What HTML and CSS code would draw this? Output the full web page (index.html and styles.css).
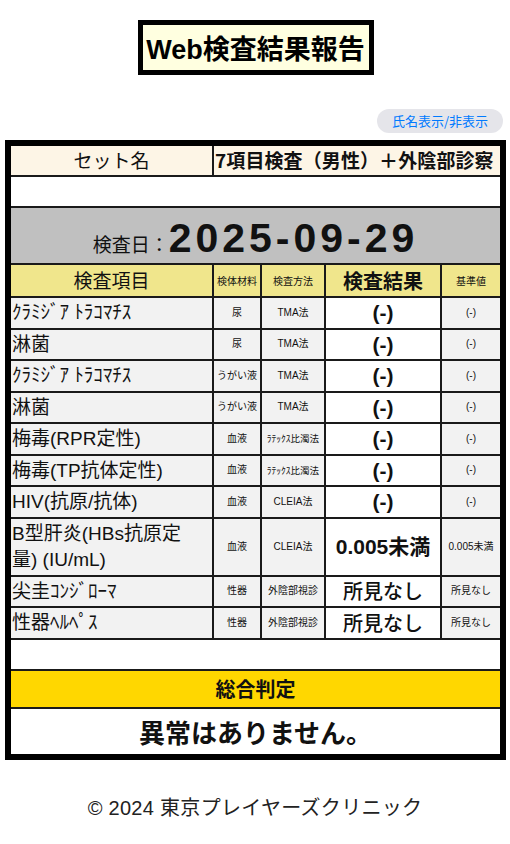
FILE: index.html
```html
<!DOCTYPE html>
<html lang="ja">
<head>
<meta charset="utf-8">
<title>Web検査結果報告</title>
<link rel="stylesheet" href="styles.css">
</head>
<body>
<div class="page">
  <header class="title-wrap">
    <h1 class="title">Web検査結果報告</h1>
  </header>
  <div class="toggle-row">
    <button class="toggle">氏名表示/非表示</button>
  </div>
  <div class="report">
    <table class="grid">
      <colgroup>
        <col class="c-item"><col class="c-mat"><col class="c-meth"><col class="c-res"><col class="c-ref">
      </colgroup>
      <tr class="r-set">
        <td class="set-label">セット名</td>
        <td class="set-value" colspan="4">7項目検査（男性）＋外陰部診察</td>
      </tr>
      <tr class="r-blank"><td colspan="5" class="blank"></td></tr>
      <tr class="r-date">
        <td colspan="5" class="date"><span class="date-label">検査日：</span><span class="date-value">2025-09-29</span></td>
      </tr>
      <tr class="r-head">
        <td class="h-item">検査項目</td>
        <td class="h-small">検体材料</td>
        <td class="h-small">検査方法</td>
        <td class="h-res">検査結果</td>
        <td class="h-small">基準値</td>
      </tr>
      <tr class="r-data">
        <td class="item">ｸﾗﾐｼﾞｱ ﾄﾗｺﾏﾁｽ</td><td class="small">尿</td><td class="small">TMA法</td><td class="res">(-)</td><td class="small">(-)</td>
      </tr>
      <tr class="r-data">
        <td class="item">淋菌</td><td class="small">尿</td><td class="small">TMA法</td><td class="res">(-)</td><td class="small">(-)</td>
      </tr>
      <tr class="r-data">
        <td class="item">ｸﾗﾐｼﾞｱ ﾄﾗｺﾏﾁｽ</td><td class="small">うがい液</td><td class="small">TMA法</td><td class="res">(-)</td><td class="small">(-)</td>
      </tr>
      <tr class="r-data">
        <td class="item">淋菌</td><td class="small">うがい液</td><td class="small">TMA法</td><td class="res">(-)</td><td class="small">(-)</td>
      </tr>
      <tr class="r-data">
        <td class="item">梅毒(RPR定性)</td><td class="small">血液</td><td class="small tiny">ﾗﾃｯｸｽ比濁法</td><td class="res">(-)</td><td class="small">(-)</td>
      </tr>
      <tr class="r-data">
        <td class="item">梅毒(TP抗体定性)</td><td class="small">血液</td><td class="small tiny">ﾗﾃｯｸｽ比濁法</td><td class="res">(-)</td><td class="small">(-)</td>
      </tr>
      <tr class="r-data">
        <td class="item">HIV(抗原/抗体)</td><td class="small">血液</td><td class="small">CLEIA法</td><td class="res">(-)</td><td class="small">(-)</td>
      </tr>
      <tr class="r-tall">
        <td class="item">B型肝炎(HBs抗原定<br>量) (IU/mL)</td><td class="small">血液</td><td class="small">CLEIA法</td><td class="res">0.005未満</td><td class="small">0.005未満</td>
      </tr>
      <tr class="r-data">
        <td class="item">尖圭ｺﾝｼﾞﾛｰﾏ</td><td class="small">性器</td><td class="small">外陰部視診</td><td class="res res-text">所見なし</td><td class="small">所見なし</td>
      </tr>
      <tr class="r-data">
        <td class="item">性器ﾍﾙﾍﾟｽ</td><td class="small">性器</td><td class="small">外陰部視診</td><td class="res res-text">所見なし</td><td class="small">所見なし</td>
      </tr>
      <tr class="r-blank"><td colspan="5" class="blank"></td></tr>
      <tr class="r-judge"><td colspan="5" class="judge">総合判定</td></tr>
      <tr class="r-verdict"><td colspan="5" class="verdict">異常はありません。</td></tr>
    </table>
  </div>
  <footer class="footer">© 2024 東京プレイヤーズクリニック</footer>
</div>
</body>
</html>
```

FILE: styles.css
```css
* { box-sizing: border-box; }

html, body {
  margin: 0;
  padding: 0;
  background: #ffffff;
}

body {
  font-family: "Liberation Sans", "Noto Sans CJK JP", sans-serif;
  color: #111;
}

.page {
  padding-top: 20px;
}

.title-wrap {
  display: flex;
  justify-content: center;
}

.title {
  margin: 0 0 0 1px;
  width: 236px;
  height: 55px;
  border: 5px solid #000;
  background: #ffffe0;
  display: flex;
  align-items: center;
  justify-content: center;
  font-family: "Liberation Sans", "Noto Sans CJK JP", sans-serif;
  font-size: 27px;
  font-weight: 700;
  color: #000;
  white-space: nowrap;
}

.toggle-row {
  display: flex;
  justify-content: flex-end;
  padding-right: 7px;
  margin-top: 34px;
}

.toggle {
  width: 126px;
  height: 24px;
  border: none;
  border-radius: 12px;
  background: #e5e5ea;
  color: #007aff;
  font-family: "Noto Sans CJK JP", sans-serif;
  font-size: 13px;
  padding: 0;
  line-height: 24px;
}

.report {
  margin: 7px 4px 0 5px;
  border: 6px solid #000;
  background: #fff;
}

.grid {
  width: 100%;
  border-collapse: collapse;
  border-style: hidden;
  table-layout: fixed;
}

.c-item { width: 202px; }
.c-mat { width: 48px; }
.c-meth { width: 64px; }
.c-res { width: 116px; }
.c-ref { width: auto; }

.grid td {
  border: 2px solid #1a1a1a;
  padding: 0;
  text-align: center;
  vertical-align: middle;
  line-height: 1.2;
}

.r-set td { height: 30px; }
.r-blank td { height: 31px; }
.r-date td { height: 56px; }
.r-head td { height: 33px; }
.r-data td { height: 31.5px; }
.r-tall td { height: 58px; }
.r-judge td { height: 38px; }
.r-verdict td { height: 46px; }

.set-label,
.set-value {
  background: #fdf5e6;
  font-family: "Noto Sans CJK JP", sans-serif;
}

.set-label {
  font-size: 19px;
  font-weight: 400;
}

.set-value {
  text-align: left !important;
  font-size: 19px;
  font-weight: 700;
  white-space: nowrap;
  overflow: hidden;
  padding-left: 1px !important;
  letter-spacing: 0.1px;
}

.blank { background: #fff; }

.date {
  background: #c0c0c0;
  padding-top: 6px !important;
}

.date-label {
  font-family: "Noto Sans CJK JP", sans-serif;
  font-size: 19px;
}

.date-value {
  font-family: "Liberation Sans", sans-serif;
  font-size: 41px;
  font-weight: 700;
  letter-spacing: 4px;
}

.r-head td {
  background: #f0e68c;
}

.h-item {
  font-family: "Noto Sans CJK JP", sans-serif;
  font-size: 19px;
}

.h-res {
  font-family: "Noto Sans CJK JP", sans-serif;
  font-size: 20px;
  font-weight: 700;
}

.h-small {
  font-family: "Noto Sans CJK JP", sans-serif;
  font-size: 10px;
}

.item {
  background: #f2f2f2;
  text-align: left !important;
  padding-left: 1px !important;
  font-size: 19px;
  line-height: 1.35 !important;
}

.small {
  background: #f2f2f2;
  font-size: 10px;
}

.tiny {
  font-size: 9.5px;
  white-space: nowrap;
}

.res {
  background: #fff;
  font-size: 21px;
  font-weight: 700;
}

.res-text {
  font-family: "Noto Sans CJK JP", sans-serif;
  font-size: 20px;
  font-weight: 500;
}

.judge {
  background: #ffd700;
  font-family: "Noto Sans CJK JP", sans-serif;
  font-size: 20px;
  font-weight: 700;
}

.verdict {
  background: #fff;
  font-family: "Noto Sans CJK JP", sans-serif;
  font-size: 26px;
  font-weight: 700;
}

.footer {
  margin-top: 34px;
  text-align: center;
  font-family: "Liberation Sans", "Noto Sans CJK JP", sans-serif;
  font-size: 20px;
  line-height: 28px;
  color: #222;
  letter-spacing: 0.3px;
}
```
